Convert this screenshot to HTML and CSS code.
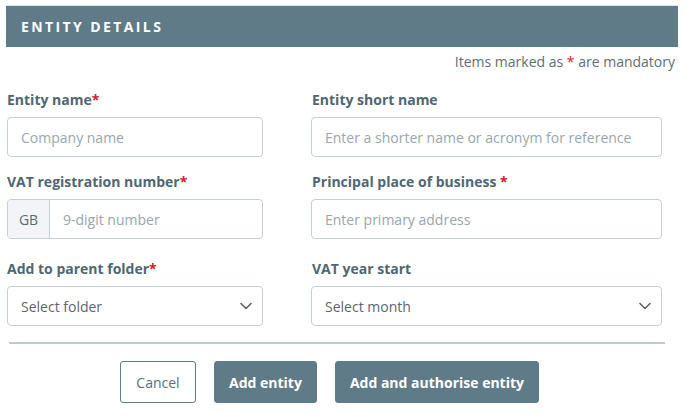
FILE: index.html
```html
<!DOCTYPE html>
<html lang="en">
<head>
<meta charset="utf-8">
<title>Entity details</title>
<link rel="stylesheet" href="styles.css">
</head>
<body>
<div class="page">
  <div class="panel-header">ENTITY DETAILS</div>
  <p class="mandatory">Items marked as <span class="req">*</span> are mandatory</p>
  <form class="form">
    <div class="row row-1">
      <div class="field field-left">
        <label class="label">Entity name<span class="req">*</span></label>
        <div class="input"><span class="placeholder">Company name</span></div>
      </div>
      <div class="field field-right">
        <label class="label">Entity short name</label>
        <div class="input"><span class="placeholder">Enter a shorter name or acronym for reference</span></div>
      </div>
    </div>
    <div class="row row-2">
      <div class="field field-left">
        <label class="label">VAT registration number<span class="req">*</span></label>
        <div class="input input-group">
          <span class="prefix">GB</span>
          <span class="placeholder">9-digit number</span>
        </div>
      </div>
      <div class="field field-right">
        <label class="label">Principal place of business <span class="req">*</span></label>
        <div class="input"><span class="placeholder">Enter primary address</span></div>
      </div>
    </div>
    <div class="row row-3">
      <div class="field field-left">
        <label class="label">Add to parent folder<span class="req">*</span></label>
        <div class="input select">
          <span class="value">Select folder</span>
          <svg class="chevron" width="12" height="8" viewBox="0 0 12 8"><path d="M1 1.5 L6 6.5 L11 1.5" fill="none" stroke="#5a5f63" stroke-width="1.5" stroke-linecap="round" stroke-linejoin="round"/></svg>
        </div>
      </div>
      <div class="field field-right">
        <label class="label">VAT year start</label>
        <div class="input select">
          <span class="value">Select month</span>
          <svg class="chevron" width="12" height="8" viewBox="0 0 12 8"><path d="M1 1.5 L6 6.5 L11 1.5" fill="none" stroke="#5a5f63" stroke-width="1.5" stroke-linecap="round" stroke-linejoin="round"/></svg>
        </div>
      </div>
    </div>
    <hr class="divider">
    <div class="actions">
      <button type="button" class="btn btn-outline">Cancel</button>
      <button type="button" class="btn btn-primary">Add entity</button>
      <button type="button" class="btn btn-primary">Add and authorise entity</button>
    </div>
  </form>
</div>
</body>
</html>
```

FILE: styles.css
```css
* { box-sizing: border-box; }
html, body { margin: 0; padding: 0; background: #ffffff; }
body {
  font-family: "Open Sans", "Liberation Sans", sans-serif;
  font-size: 14px;
  color: #4f6773;
}
.page {
  width: 686px;
  padding: 5px 8px 0 6px;
}
.panel-header {
  height: 42px;
  background: #607b88;
  border-top: 1px solid #dde4e8;
  color: #ffffff;
  font-weight: 700;
  font-size: 14px;
  letter-spacing: 2.4px;
  padding-left: 15px;
  display: flex;
  align-items: center;
}
.mandatory {
  margin: 5px 3px 0 0;
  text-align: right;
  line-height: 20px;
  color: #5d6f78;
}
.req { color: #d0202a; }
.form { margin: 0; padding-left: 1px; }
.row {
  display: grid;
  grid-template-columns: 256px 351px;
  column-gap: 48px;
}
.row-1 { margin-top: 18px; }
.row-2 { margin-top: 15px; }
.row-3 { margin-top: 20px; }
.label {
  display: block;
  font-weight: 700;
  font-size: 14px;
  line-height: 20px;
  color: #4f6773;
  margin-bottom: 7px;
}
.field-right .label { padding-left: 1px; }
.input {
  height: 40px;
  border: 1px solid #c5d0d6;
  border-radius: 4px;
  display: flex;
  align-items: center;
  padding: 0 13px;
  background: #fff;
}
.placeholder { color: #9aa6ae; }
.input-group { padding: 0; overflow: hidden; }
.input-group .prefix {
  width: 42px;
  height: 100%;
  background: #f2f4f7;
  border-right: 1px solid #c5d0d6;
  display: flex;
  align-items: center;
  justify-content: center;
  color: #5d6a72;
}
.input-group .placeholder { padding-left: 13px; }
.select { justify-content: space-between; padding-right: 10px; }
.select .value { color: #5a6670; }
.chevron { display: block; }
.divider {
  border: 0;
  height: 2px;
  background: #c0cbd1;
  margin: 16px 13px 0 2px;
}
.actions {
  display: flex;
  justify-content: center;
  gap: 18px;
  margin-top: 17px;
  padding-right: 26px;
}
.btn {
  height: 42px;
  font-family: inherit;
  font-size: 14px;
  border-radius: 3px;
  padding: 0 14px;
  cursor: pointer;
}
.btn-outline {
  background: #fff;
  border: 1px solid #607b88;
  color: #5d6f78;
  width: 76px;
  padding: 0;
}
.btn-primary {
  background: #607b88;
  border: 1px solid #607b88;
  color: #fff;
  font-weight: 700;
}
```
